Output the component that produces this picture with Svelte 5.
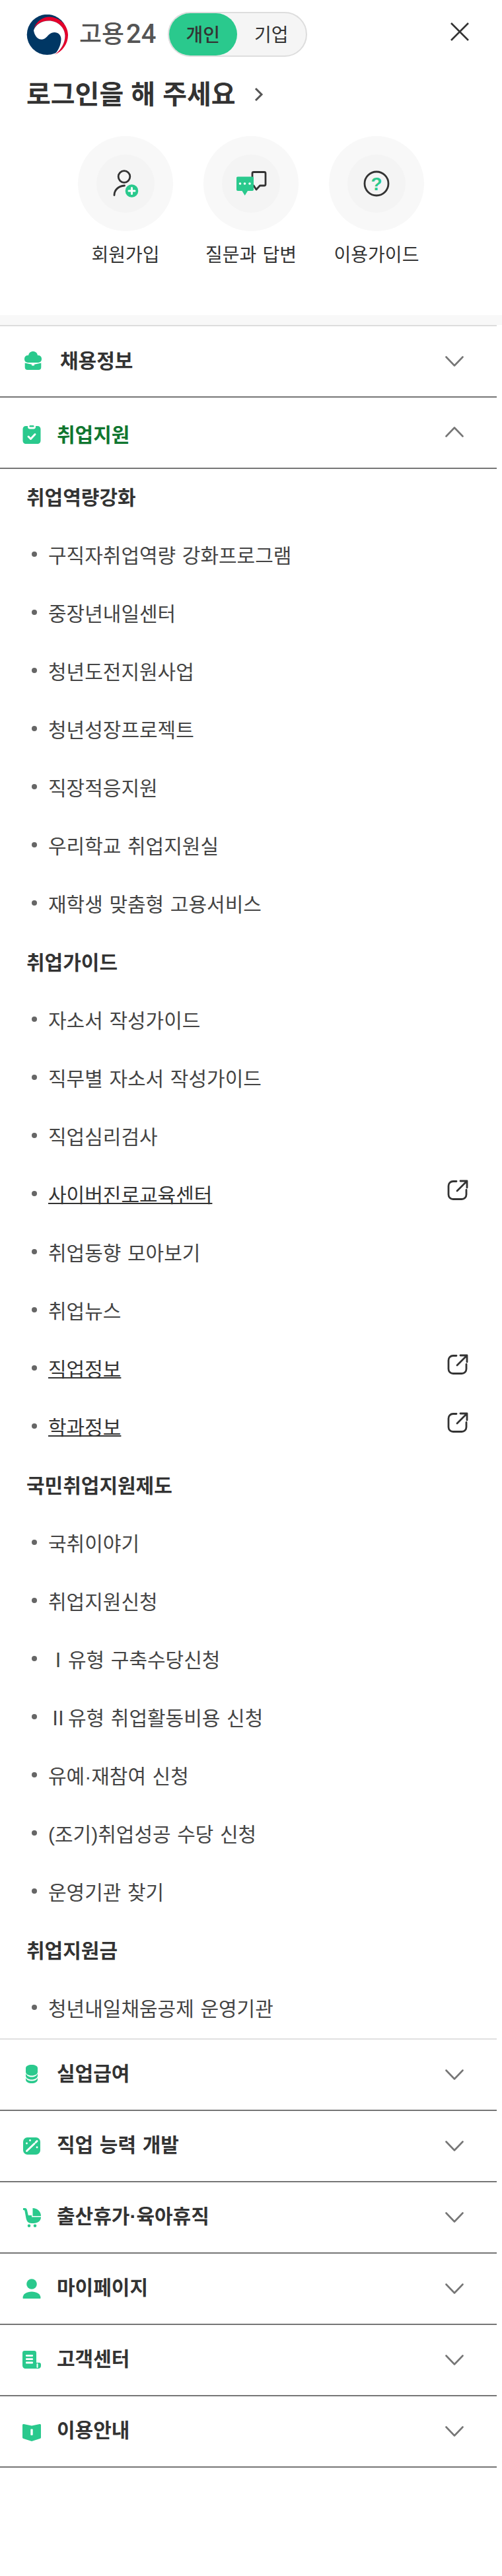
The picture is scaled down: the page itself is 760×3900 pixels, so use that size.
<script lang="ts">
  const quick = [
    { key: 'join', label: '회원가입' },
    { key: 'qna', label: '질문과 답변' },
    { key: 'guide', label: '이용가이드' }
  ];

  const groups = [
    {
      title: '취업역량강화',
      items: [
        { name: '구직자취업역량 강화프로그램' },
        { name: '중장년내일센터' },
        { name: '청년도전지원사업' },
        { name: '청년성장프로젝트' },
        { name: '직장적응지원' },
        { name: '우리학교 취업지원실' },
        { name: '재학생 맞춤형 고용서비스' }
      ]
    },
    {
      title: '취업가이드',
      items: [
        { name: '자소서 작성가이드' },
        { name: '직무별 자소서 작성가이드' },
        { name: '직업심리검사' },
        { name: '사이버진로교육센터', ext: true },
        { name: '취업동향 모아보기' },
        { name: '취업뉴스' },
        { name: '직업정보', ext: true },
        { name: '학과정보', ext: true }
      ]
    },
    {
      title: '국민취업지원제도',
      items: [
        { name: '국취이야기' },
        { name: '취업지원신청' },
        { roman: 'Ⅰ', name: '유형 구축수당신청' },
        { roman: 'Ⅱ', name: '유형 취업활동비용 신청' },
        { name: '유예·재참여 신청' },
        { name: '(조기)취업성공 수당 신청' },
        { name: '운영기관 찾기' }
      ]
    },
    {
      title: '취업지원금',
      items: [{ name: '청년내일채움공제 운영기관' }]
    }
  ];

  const lower = [
    { key: 'coins', label: '실업급여' },
    { key: 'wand', label: '직업 능력 개발' },
    { key: 'stroller', label: '출산휴가·육아휴직' },
    { key: 'person', label: '마이페이지' },
    { key: 'doc', label: '고객센터' },
    { key: 'book', label: '이용안내' }
  ];
</script>

{#snippet chevron(up = false)}
  <svg class="chevron" viewBox="0 0 28 16" aria-hidden="true">
    <path d={up ? 'M1.5 14.5 14 1.5l12.5 13' : 'M1.5 1.5 14 14.5l12.5-13'} />
  </svg>
{/snippet}

{#snippet menuIcon(key)}
  <svg class="menu-icon" viewBox="0 0 28 30" aria-hidden="true">
    {#if key === 'briefcase'}
      <path d="M7 7C7 2.500 10.500 0 14 0s7 2.500 7 7z" />
      <rect x="1" y="6" width="26" height="11" rx="5" />
      <path d="M1.700 17.500 12 19.800v1.700h4v-1.700l10.300-2.300V24a4 4 0 0 1-4 4H5.700a4 4 0 0 1-4-4z" />
    {:else if key === 'clipboard'}
      <path d="M5 1h3v1.500C8 4.500 9.500 5.500 11 5.500h6c1.500 0 3-1 3-3V1h3c2.500 0 4.500 2 4.500 4.500V23c0 3-2 5-5 5H5.500c-3 0-5-2-5-5V5.500C.5 3 2.500 1 5 1z" />
      <rect x="10.500" y="0" width="7" height="2.500" rx="1.200" />
      <path class="knock" d="M9 17l3.500 3.500L19 13.500" />
    {:else if key === 'coins'}
      <path d="M5 5c0-3 4-5 9-5s9 2 9 5v6c0 3-4 5.500-9 5.500S5 14 5 11z" />
      <path d="M5 13.500c1.500 3 5 5 9 5s7.500-2 9-5v3c0 3.500-4 6-9 6s-9-2.500-9-6z" />
      <path d="M5 20c1.500 3 5 4.500 9 4.500s7.500-1.500 9-4.500v2.500c0 3.500-4 5.500-9 5.500s-9-2-9-5.500z" />
    {:else if key === 'wand'}
      <rect x="1" y="2" width="26" height="26" rx="6.500" />
      <path class="knock" d="M6.500 22.500 18 11.500" stroke-width="3.200" />
      <path class="knock" d="M20 9.500l2-2" stroke-width="3" />
      <circle class="dot" cx="6.500" cy="11" r="1.400" />
      <circle class="dot" cx="11.500" cy="6.500" r="1.400" />
      <circle class="dot" cx="22" cy="17" r="1.400" />
    {:else if key === 'stroller'}
      <path d="M15.500 1c7 0 12.500 5 12.500 12h-12.500z" />
      <path d="M4 1c1.500 0 2.500 1 3 3l1.800 8H14V14.500H28c0 6-5 9.500-11 9.500h-3C8.500 24 6.500 21 5.500 16.500L3.500 5.500c-.2-1-.8-1.500-2-1.500H1V1z" />
      <circle cx="10" cy="27.700" r="2.300" />
      <circle cx="19" cy="27.700" r="2.300" />
    {:else if key === 'person'}
      <circle cx="14" cy="8" r="7.800" />
      <path d="M.5 29c0-6 6-9.500 13.500-9.500S27.500 23 27.500 29c0 .5-.3 1-1 1H1.500c-.7 0-1-.5-1-1z" />
    {:else if key === 'doc'}
      <path d="M3 1h15c1.700 0 3 1.300 3 3v15h4.500c1.400 0 2.500 1.100 2.500 2.500V24c0 2.800-2.200 4-4 4H5c-3 0-5-2-5-5V4c0-1.700 1.300-3 3-3z" />
      <rect class="dot" x="5" y="7" width="11" height="2.800" rx="1" />
      <rect class="dot" x="5" y="12.300" width="11" height="2.800" rx="1" />
      <rect class="dot" x="5" y="17.600" width="11" height="2.800" rx="1" />
      <path class="knock thin" d="M22.500 21v5" />
    {:else if key === 'book'}
      <path d="M0 5.500c0-1 1-1.800 2-1.500L14 6.500 26 4c1-.3 2 .5 2 1.500V24c0 1-.5 1.600-1.500 2L14 30 1.500 26C.5 25.600 0 25 0 24z" />
      <rect class="dot" x="12.300" y="11.500" width="3.400" height="9.500" rx="1" />
    {/if}
  </svg>
{/snippet}

<div class="page">
  <header class="top">
    <svg class="logo" viewBox="0 0 63 61" aria-hidden="true">
      <circle cx="31.300" cy="30.400" r="30.600" fill="#003764" />
      <path fill="#e4002b" d="M11 22C15 9 26 3.500 35 3.500 50 4 63 16 63 31c0 14-9 25-20 29.500 10-7.500 15.500-17.500 15.500-28.500C58 19 47 9.500 34 9.500 23 9.500 14 15 11 22z" />
      <path fill="#fff" d="M11 24c3-9 12-14.500 23-14.500C47 9.500 58 19 58.500 32c0 11-5.500 21-15.500 28.500 6-7.500 9.500-15.500 9.500-23.500 0-6-4.500-10-10-10-6.500 0-8.500 4-12.500 7.500-3 3-6 3.500-9 3C16 36.500 12 31 11 24z" />
    </svg>
    <span class="brand">고용<span class="digits">24</span></span>
    <div class="switch">
      <span class="tab active">개인</span>
      <span class="tab">기업</span>
    </div>
    <svg class="close" viewBox="0 0 28 28" aria-hidden="true">
      <path d="M1 1l26 26M27 1 1 27" />
    </svg>
  </header>

  <div class="login">
    <span>로그인을 해 주세요</span>
    <svg class="login-arrow" viewBox="0 0 14 22" aria-hidden="true">
      <path d="M2 2l9 9-9 9" />
    </svg>
  </div>

  <div class="quick">
    {#each quick as q}
      <div class="quick-item">
        <div class="outer">
          <div class="inner">
            <svg viewBox="0 0 88 88" aria-hidden="true">
              {#if q.key === 'join'}
                <circle class="ink" cx="42" cy="33.500" r="8.800" />
                <path class="ink" d="M27 61.500C27 54 33 47.500 42.500 47" />
                <circle class="fill" cx="53.500" cy="55" r="9.800" />
                <path class="plus" d="M49 55h9M53.500 50.500v9" />
              {:else if q.key === 'qna'}
                <path class="ink" d="M46 47V28.500c0-1.200 .8-2 2-2h16c1.200 0 2 .8 2 2V45c0 1.200-.8 2-2 2h-6.500L52 53l-4-6" />
                <path class="fill" d="M24 33.500h22c1.200 0 2 .8 2 2V53c0 1.200-.8 2-2 2H39l-4.300 7-4.300-7H24c-1.200 0-2-.8-2-2V35.500c0-1.200 .8-2 2-2z" />
                <circle class="dot" cx="27.500" cy="44" r="1.800" />
                <circle class="dot" cx="34.500" cy="44" r="1.800" />
                <circle class="dot" cx="42" cy="44" r="1.800" />
              {:else}
                <circle class="ink" cx="44" cy="44" r="18" />
                <text class="mark" x="44" y="53.500" text-anchor="middle">?</text>
              {/if}
            </svg>
          </div>
        </div>
        <span class="quick-label">{q.label}</span>
      </div>
    {/each}
  </div>

  <div class="band"></div>

  <nav class="menu">
    <div class="row first">
      {@render menuIcon('briefcase')}
      <span class="row-label">채용정보</span>
      {@render chevron()}
    </div>
    <div class="row open">
      {@render menuIcon('clipboard')}
      <span class="row-label">취업지원</span>
      {@render chevron(true)}
    </div>

    <div class="sub">
      {#each groups as group}
        <div class="sub-title">{group.title}</div>
        {#each group.items as item}
          <div class="sub-item">
            <span class="bullet"></span>
            <span class:ext-name={item.ext}>{#if item.roman}<span class="roman">{item.roman}</span>{/if}{item.name}</span>
            {#if item.ext}
              <svg class="ext" viewBox="0 0 32 32" aria-hidden="true">
                <path d="M14 2.500H9C5 2.500 2 5.500 2 9.500v13c0 4 3 7 7 7h13c4 0 7-3 7-7v-7" />
                <path d="M15 17 30 2M20 2h10v10" />
              </svg>
            {/if}
          </div>
        {/each}
      {/each}
    </div>

    <div class="lower">
      {#each lower as row}
        <div class="row">
          {@render menuIcon(row.key)}
          <span class="row-label">{row.label}</span>
          {@render chevron()}
        </div>
      {/each}
    </div>
  </nav>
</div>

<style>
  :global(body) {
    background: #fff;
  }

  .page {
    width: 760px;
    font-family: "Liberation Sans", "Noto Sans CJK KR", sans-serif;
    word-spacing: 0.08em;
    color: #333;
  }

  .top {
    display: flex;
    align-items: center;
    height: 68px;
    padding: 18px 50px 0 40px;
  }

  .logo {
    width: 63px;
    height: 61px;
    flex: none;
  }

  .brand {
    margin-left: 17px;
    font-size: 37px;
    font-weight: 500;
    line-height: 68px;
    color: #555;
    white-space: nowrap;
  }

  .digits {
    margin-left: 3px;
    font-family: Roboto, sans-serif;
    font-size: 40px;
  }

  .switch {
    display: flex;
    box-sizing: border-box;
    width: 211px;
    height: 68px;
    margin-left: 17px;
    border: 2px solid #ddd;
    border-radius: 34px;
    background: #f5f5f5;
  }

  .tab {
    width: 104px;
    height: 64px;
    line-height: 68px;
    border-radius: 32px;
    text-align: center;
    font-size: 28px;
  }

  .tab.active {
    background: #2ac98d;
    font-weight: 500;
  }

  .close {
    width: 28px;
    height: 28px;
    margin-left: auto;
    margin-top: -8px;
    fill: none;
    stroke: #333;
    stroke-width: 2.600;
  }

  .login {
    display: flex;
    align-items: center;
    margin-top: 30px;
    padding-left: 40px;
    font-size: 40px;
    font-weight: 700;
    line-height: 54px;
    word-spacing: 0;
  }

  .login-arrow {
    width: 14px;
    height: 22px;
    margin-left: 28px;
    fill: none;
    stroke: #555;
    stroke-width: 3;
  }

  .quick {
    display: flex;
    justify-content: center;
    gap: 46px;
    margin-top: 36px;
  }

  .quick-item {
    display: flex;
    flex-direction: column;
    align-items: center;
    width: 144px;
  }

  .outer {
    display: flex;
    align-items: center;
    justify-content: center;
    width: 144px;
    height: 144px;
    border-radius: 50%;
    background: #f8f8f8;
  }

  .inner {
    width: 88px;
    height: 88px;
    border-radius: 50%;
    background: #f4f4f4;
  }

  .inner svg {
    display: block;
    width: 88px;
    height: 88px;
  }

  .ink {
    fill: none;
    stroke: #333;
    stroke-width: 2.800;
    stroke-linecap: round;
    stroke-linejoin: round;
  }

  .fill {
    fill: #2ac98d;
  }

  .plus {
    fill: none;
    stroke: #fff;
    stroke-width: 3;
    stroke-linecap: round;
  }

  .dot {
    fill: #fff;
  }

  .mark {
    fill: #2ac98d;
    font-size: 28px;
    font-weight: 700;
  }

  .quick-label {
    margin-top: 16px;
    font-size: 28px;
    line-height: 42px;
    white-space: nowrap;
  }

  .band {
    height: 15px;
    margin-top: 69px;
    background: #f8f8f8;
  }

  .menu {
    width: 752px;
  }

  .row {
    display: flex;
    align-items: center;
    box-sizing: border-box;
    height: 108px;
    padding: 0 50px 0 34px;
    border-bottom: 2px solid #767676;
  }

  .row.first {
    height: 110px;
    border-top: 2px solid #ddd;
    padding-left: 36px;
  }

  .row.first .row-label {
    margin-left: 27px;
  }

  .row.open {
    padding-top: 8px;
  }

  .row.open .chevron {
    margin-top: -10px;
  }

  .lower .row-label {
    margin-top: -3px;
  }

  .menu-icon {
    display: block;
    flex: none;
    width: 28px;
    height: 30px;
    fill: #2ac98d;
  }

  .knock {
    fill: none;
    stroke: #fff;
    stroke-width: 3;
    stroke-linecap: round;
    stroke-linejoin: round;
  }

  .knock.thin {
    stroke-width: 2;
  }

  .row-label {
    margin-left: 24px;
    font-size: 30px;
    font-weight: 700;
    line-height: 40px;
  }

  .row.open .row-label {
    color: #10762f;
  }

  .chevron {
    width: 28px;
    height: 16px;
    margin-left: auto;
    fill: none;
    stroke: #767676;
    stroke-width: 2.600;
    stroke-linecap: round;
    stroke-linejoin: round;
  }

  .sub-title {
    height: 88px;
    padding-left: 40px;
    font-size: 30px;
    font-weight: 700;
    line-height: 88px;
  }

  .sub-item {
    display: flex;
    align-items: center;
    box-sizing: border-box;
    height: 88px;
    padding: 0 43px 6px 48px;
    font-size: 30px;
    color: #444;
  }

  .roman {
    font-family: "Noto Sans CJK KR", sans-serif;
  }

  .bullet {
    flex: none;
    width: 8px;
    height: 8px;
    margin-right: 17px;
    border-radius: 50%;
    background: #666;
  }

  .ext-name {
    text-decoration: underline;
    text-decoration-thickness: 2px;
    color: #333;
  }

  .ext {
    width: 32px;
    height: 32px;
    margin: -10px 0 0 auto;
    fill: none;
    stroke: #333;
    stroke-width: 2.800;
    stroke-linecap: round;
    stroke-linejoin: round;
  }

  .lower {
    border-top: 2px solid #e0e0e0;
  }
</style>
